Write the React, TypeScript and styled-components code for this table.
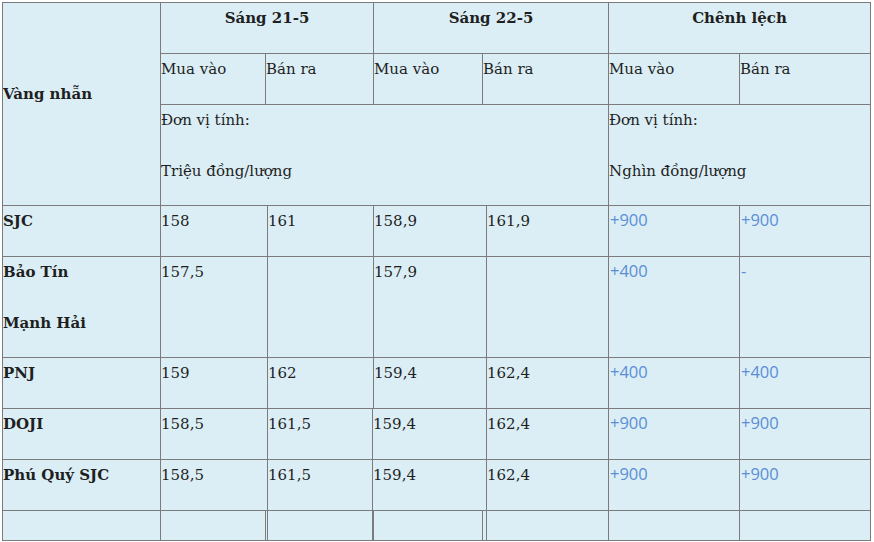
import React from 'react';
import styled, { createGlobalStyle } from 'styled-components';

const GlobalStyle = createGlobalStyle`
    body {
        margin: 0;
        background: #ffffff;
        font-family: "DejaVu Serif", "Liberation Serif", serif;
    }
`;

const colors = {
    CELL: '#dbeef5',
    LINE: '#7b7b7b',
    TEXT: '#1f1f1f',
    BLUE: '#5a8dd6',
};

type Span = [number, number];

type Row = {
    name: string[];
    cells: { span: Span; value: string; diff?: boolean }[];
    height: number;
};

// column spans follow the source table, whose cells are not aligned row to row
const wide: Span[] = [[2, 4], [4, 6], [6, 8], [8, 9], [9, 10], [10, 11]];
const shifted: Span[] = [[2, 4], [4, 5], [5, 8], [8, 9], [9, 10], [10, 11]];

const rows: Row[] = [
    { name: ['SJC'], values: ['158', '161', '158,9', '161,9', '+900', '+900'], spans: wide },
    { name: ['Bảo Tín', 'Mạnh Hải'], values: ['157,5', '', '157,9', '', '+400', '-'], spans: wide },
    { name: ['PNJ'], values: ['159', '162', '159,4', '162,4', '+400', '+400'], spans: wide },
    { name: ['DOJI'], values: ['158,5', '161,5', '159,4', '162,4', '+900', '+900'], spans: shifted },
    { name: ['Phú Quý SJC'], values: ['158,5', '161,5', '159,4', '162,4', '+900', '+900'], spans: shifted },
].map((r) => ({
    name: r.name,
    height: r.name.length > 1 ? 100 : 50,
    cells: r.values.map((value, i) => ({ span: r.spans[i], value, diff: i >= 4 })),
}));

const App: React.FC = () => {
    let line = 4;
    return (
        <>
            <GlobalStyle />
            <Wrap>
                <Table $rows={[50, 50, 100, ...rows.map((r) => r.height), 29]}>
                    <Cell $col={[1, 2]} $row={[1, 4]} $bold $middle>
                        Vàng nhẫn
                    </Cell>
                    <Cell $col={[2, 6]} $row={[1, 2]} $bold $center>Sáng 21-5</Cell>
                    <Cell $col={[6, 9]} $row={[1, 2]} $bold $center>Sáng 22-5</Cell>
                    <Cell $col={[9, 11]} $row={[1, 2]} $bold $center>Chênh lệch</Cell>

                    <Cell $col={[2, 3]} $row={[2, 3]}>Mua vào</Cell>
                    <Cell $col={[3, 6]} $row={[2, 3]}>Bán ra</Cell>
                    <Cell $col={[6, 7]} $row={[2, 3]}>Mua vào</Cell>
                    <Cell $col={[7, 9]} $row={[2, 3]}>Bán ra</Cell>
                    <Cell $col={[9, 10]} $row={[2, 3]}>Mua vào</Cell>
                    <Cell $col={[10, 11]} $row={[2, 3]}>Bán ra</Cell>

                    <Cell $col={[2, 9]} $row={[3, 4]}>
                        <Para>Đơn vị tính:</Para>
                        <Para>Triệu đồng/lượng</Para>
                    </Cell>
                    <Cell $col={[9, 11]} $row={[3, 4]}>
                        <Para>Đơn vị tính:</Para>
                        <Para>Nghìn đồng/lượng</Para>
                    </Cell>

                    {rows.map((r) => {
                        const at = line++;
                        return (
                            <React.Fragment key={r.name.join()}>
                                <Cell $col={[1, 2]} $row={[at, at + 1]} $bold>
                                    {r.name.map((n) => <Para key={n}>{n}</Para>)}
                                </Cell>
                                {r.cells.map((c, i) => (
                                    <Cell key={i} $col={c.span} $row={[at, at + 1]} $diff={c.diff}>
                                        {c.value}
                                    </Cell>
                                ))}
                            </React.Fragment>
                        );
                    })}

                    {Array.from({ length: 10 }, (_, i) => (
                        <Cell key={i} $col={[i + 1, i + 2]} $row={[line, line + 1]} />
                    ))}
                </Table>
            </Wrap>
        </>
    );
};

const Wrap = styled.div`
    padding: 2px;
`;

const Table = styled.div<{ $rows: number[] }>`
    display: grid;
    width: fit-content;
    grid-template-columns: 157px 104px 1px 104px 0px 108px 3px 121px 130px 130px;
    grid-template-rows: ${(p) => p.$rows.map((h) => `${h}px`).join(' ')};
    gap: 1px;
    border: 1px solid ${colors.LINE};
    background-color: ${colors.LINE};
`;

const Cell = styled.div<{
    $col: Span;
    $row: Span;
    $bold?: boolean;
    $center?: boolean;
    $middle?: boolean;
    $diff?: boolean;
}>`
    grid-column: ${(p) => `${p.$col[0]} / ${p.$col[1]}`};
    grid-row: ${(p) => `${p.$row[0]} / ${p.$row[1]}`};
    display: flex;
    flex-direction: column;
    justify-content: ${(p) => (p.$middle ? 'center' : 'flex-start')};
    align-items: ${(p) => (p.$center ? 'center' : 'flex-start')};
    padding: ${(p) => (p.$middle ? '0 0 20px 0' : p.$diff ? '2px 0 0 1px' : '3px 0 0 0')};
    overflow: hidden;
    white-space: nowrap;
    background-color: ${colors.CELL};
    color: ${(p) => (p.$diff ? colors.BLUE : colors.TEXT)};
    font-family: ${(p) => (p.$diff ? '"Open Sans", "Noto Sans", sans-serif' : '"DejaVu Serif", "Liberation Serif", serif')};
    font-size: ${(p) => (p.$diff ? '16.5px' : '15px')};
    font-weight: ${(p) => (p.$bold ? 700 : 400)};
    line-height: 24px;
`;

const Para = styled.div`
    & + & {
        margin-top: 27px;
    }
`;

export default App;
